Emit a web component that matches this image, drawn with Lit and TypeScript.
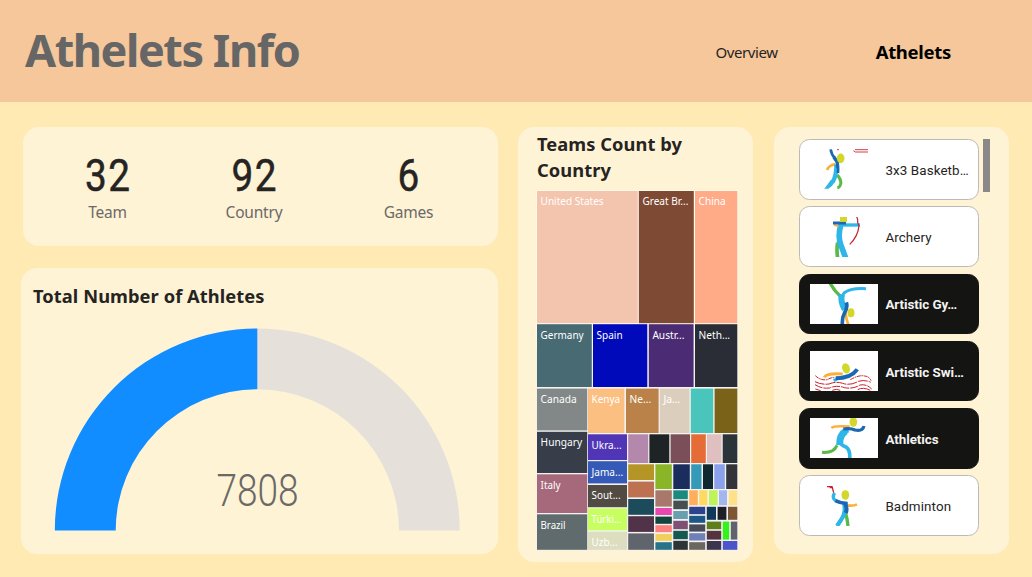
import { LitElement, html, svg, css } from "lit";
import { customElement } from "lit/decorators.js";

// x1, y1, x2, y2, fill, label, label width
type Cell = [number, number, number, number, string, string?, number?];

const CELLS: Cell[] = [
  [537, 191, 637.8, 323.2, "#f4c5ae", "United States", 63],
  [638.8, 191, 693.8, 323.2, "#7e4a34", "Great Br...", 46],
  [695, 191, 737.3, 323.2, "#ffab88", "China", 27],
  [537, 324.2, 591.8, 387, "#486b73", "Germany", 43],
  [593, 324.2, 647.3, 387, "#000abb", "Spain", 26],
  [648.8, 324.2, 693.6, 387, "#4b2c74", "Austr...", 32],
  [695, 324.2, 737.3, 387, "#2a2d36", "Neth...", 31.5],
  [537, 388.6, 587.2, 430.4, "#818887", "Canada", 36],
  [588, 388.6, 624.4, 433, "#fcbf82", "Kenya", 28.5],
  [626, 388.6, 658.6, 433, "#ba8248", "Ne...", 21.5],
  [659.8, 388.6, 689.5, 433, "#dccebd", "Ja...", 17],
  [690.8, 388.6, 713.2, 433, "#49c5bb"],
  [714.6, 388.6, 737.3, 433, "#7a6219"],
  [537, 431.8, 587.2, 473, "#373d49", "Hungary", 41.5],
  [537, 474.3, 587.2, 513, "#a6687b", "Italy", 20],
  [537, 514.3, 587.2, 549.8, "#5f6b6c", "Brazil", 25],
  [588, 434.3, 627, 460, "#5135b7", "Ukra...", 30],
  [588, 461.2, 627, 483.4, "#3559b6", "Jama...", 31.5],
  [588, 485, 627, 507.2, "#514b44", "Sout...", 29],
  [588, 508.4, 627, 530.3, "#c8ff60", "Türki...", 30],
  [588, 531.7, 627, 549.8, "#ddddc0", "Uzb...", 26],
  [628.2, 434.3, 648.2, 463, "#b487ad"],
  [649.4, 434.3, 669.3, 463, "#1e2426"],
  [670.6, 434.3, 690, 463, "#7b4f59"],
  [691.2, 434.3, 705.8, 463, "#e66c37"],
  [707, 434.3, 721.5, 463, "#dfbfbf"],
  [722.7, 434.3, 737.3, 463, "#2b3438"],
  [628.2, 464.3, 654, 480, "#b59525"],
  [628.2, 481.6, 654, 497.4, "#bd7150"],
  [628.2, 499, 654, 514.8, "#1c4c5b"],
  [628.2, 516.2, 654, 531.9, "#513349"],
  [628.2, 533.4, 654, 549.8, "#60656d"],
  [655.4, 464.3, 671.8, 489, "#8ab526"],
  [673.3, 464.3, 689.8, 489, "#1b2d5c"],
  [691.2, 464.3, 701.5, 489, "#3599b8"],
  [703, 464.3, 713, 489, "#10282f"],
  [714.3, 464.3, 724.8, 489, "#8ba1ec"],
  [726.2, 464.3, 737.3, 489, "#33343a"],
  [655.4, 490.3, 671.8, 506.6, "#a7786b"],
  [655.4, 508, 671.8, 515, "#e848ad"],
  [655.4, 516.6, 671.8, 523.8, "#13453f"],
  [655.4, 525.2, 671.8, 532.2, "#fc817e"],
  [655.4, 534, 671.8, 540.8, "#f2cf5b"],
  [655.4, 542.2, 671.8, 549.8, "#28738a"],
  [673.3, 490.3, 687.8, 499.2, "#1a8a80"],
  [673.3, 500.6, 687.8, 509.2, "#454f50"],
  [673.3, 511, 687.8, 519, "#68a0b0"],
  [673.3, 520.8, 687.8, 529.2, "#7e5074"],
  [673.3, 530.8, 687.8, 539.2, "#13594f"],
  [673.3, 540.8, 687.8, 549.8, "#2d3436"],
  [689.2, 490.3, 697.8, 505.2, "#ffae5c"],
  [699.2, 490.3, 707.3, 505.2, "#fedb60"],
  [709, 490.3, 717.6, 505.2, "#bef35a"],
  [719, 490.3, 727, 505.2, "#a3b6ed"],
  [728.8, 490.3, 737.3, 505.2, "#ffe18a"],
  [689.2, 506.8, 705.2, 514.2, "#2a438c"],
  [689.2, 515.8, 705.2, 522.8, "#1b5888"],
  [689.2, 524.4, 705.2, 531.6, "#484b57"],
  [689.2, 533.2, 705.2, 540.5, "#6f7fb8"],
  [689.2, 542.2, 705.2, 549.8, "#6b6660"],
  [706.8, 506.8, 716, 519.8, "#0f3a5b"],
  [717.6, 506.8, 726.4, 519.8, "#1e2027"],
  [728, 506.8, 737.3, 519.8, "#7d5734"],
  [706.8, 521.6, 721.2, 529.2, "#5e7d1b"],
  [706.8, 530.8, 721.2, 539.6, "#54343f"],
  [722.8, 521.6, 729.2, 539.6, "#33f31a"],
  [730.8, 521.6, 737.3, 539.6, "#60626e"],
  [706.8, 541, 721.2, 549.8, "#3b364e"],
  [722.8, 541, 737.3, 549.8, "#4b54c8"],
];

const basketball = svg`
  <path class="green" d="M217 182Q230 197 227 209Q225 219 217 221" stroke-width="9"/>
  <path class="orange" d="M211 149Q190 154 186 167" stroke-width="8"/>
  <path class="sky" d="M214 150Q215 183 203 203" stroke-width="13"/>
  <path class="skyfill" d="M198 196L178 223H190Q203 215 210 202Z"/>
  <path class="navy" d="M197 105Q199 121 211 133Q221 148 219 176" stroke-width="8"/>
  <path class="navy" d="M206 128L217 143L218 160" stroke-width="10"/>
  <ellipse class="head" cx="227" cy="132" rx="11.5" ry="14.5"/>
  <path class="red" d="M216 106H222M270 106H309M265 109L271 113H309" stroke-width="2.6"/>`;

const archery = svg`
  <path class="green" d="M218 382Q214 401 218 428" stroke-width="11"/>
  <path class="sky" d="M228 326Q217 366 228 390L242 428" stroke-width="17"/>
  <path class="sky" d="M218 329H285" stroke-width="10"/>
  <path class="orange" d="M207 328L221 334" stroke-width="6"/>
  <path class="navy" d="M204 323H243" stroke-width="9"/>
  <path class="headline" d="M225 312H246" stroke-width="15"/>
  <path class="red" d="M275 304L278 313V322L282 331Q279 364 254 387" stroke-width="3.6"/>`;

const gymnastics = svg`
  <path class="green" d="M120 54Q133 78 151 94" stroke-width="10"/>
  <path class="sky" d="M228 71Q182 68 162 84Q149 99 162 133" stroke-width="9"/>
  <path class="sky" d="M156 88Q150 108 164 134" stroke-width="18"/>
  <path class="orange" d="M166 138Q169 166 175 178" stroke-width="8"/>
  <path class="navy" d="M169 112Q174 128 163 145Q156 157 157 178" stroke-width="11"/>
  <ellipse class="head" cx="183" cy="143" rx="10.5" ry="13.5"/>`;

const swimming = svg`
  <path class="orange" d="M103 339Q109 326 158 329" stroke-width="9"/>
  <path class="sky" d="M131 349Q153 335 181 335" stroke-width="9"/>
  <path class="navy" d="M137 342Q182 342 202 315" stroke-width="12"/>
  <ellipse class="head" cx="168" cy="312" rx="11.5" ry="15.5" transform="rotate(-18 168 312)"/>
  <path class="red" d="M76 334Q91 349 112 346Q123 339 133 340M181 346Q207 331 224 335Q239 337 243 349" stroke-width="3" stroke-dasharray="12 2 5 2"/>
  <path class="red" d="M75 352Q94 362 117 359Q138 350 158 357Q181 365 205 351Q225 345 242 354" stroke-width="3" stroke-dasharray="30 3"/>
  <path class="red" d="M75 361Q95 374 119 371Q140 361 163 370Q190 375 210 362Q229 358 245 374" stroke-width="3" stroke-dasharray="24 3"/>
  <path class="red" d="M76 374L92 379M127 378Q139 372 151 378M203 376Q219 367 241 378" stroke-width="3"/>`;

const athletics = svg`
  <path class="green" d="M96 160Q131 163 141 139" stroke-width="9"/>
  <path class="sky" d="M176 95Q149 99 148 126Q150 137 168 144Q181 153 179 178" stroke-width="11"/>
  <path class="sky" d="M168 96Q148 107 149 138" stroke-width="21"/>
  <path class="orange" d="M124 87Q132 79 179 83" stroke-width="8"/>
  <path class="navy" d="M160 90Q183 87 195 93Q218 98 222 81" stroke-width="9.5"/>
  <ellipse class="head" cx="190" cy="69" rx="11.5" ry="14.5"/>`;

const badminton = svg`
  <path class="green" d="M166 338Q172 357 174 379" stroke-width="10"/>
  <path class="sky" d="M134 280Q124 294 137 303" stroke-width="10"/>
  <path class="sky" d="M162 310Q169 340 153 361L141 379" stroke-width="12.5"/>
  <path class="orange" d="M174 317Q189 320 201 314" stroke-width="8"/>
  <path class="navy" d="M136 303Q151 311 173 312" stroke-width="11"/>
  <path class="navy" d="M166 312Q173 330 167 340" stroke-width="12"/>
  <ellipse class="head" cx="166" cy="286" rx="11.5" ry="14.5"/>
  <path class="red" d="M111 261H128M119 264L127 264L131 279" stroke-width="4"/>`;

const SPORTS = [
  { name: "3x3 Basketb…", on: false, box: "135 104 204 120", art: basketball },
  { name: "Archery", on: false, box: "135 305 204 120", art: archery },
  { name: "Artistic Gy…", on: true, box: "60 57 204 120", art: gymnastics },
  { name: "Artistic Swi…", on: true, box: "60 260 204 120", art: swimming },
  { name: "Athletics", on: true, box: "60 57 204 120", art: athletics },
  { name: "Badminton", on: false, box: "60 259 204 120", art: badminton },
];

@customElement("app-root")
export class AppRoot extends LitElement {
  static styles = css`
    :host {
      display: block;
      width: 1032px;
      height: 577px;
      overflow: hidden;
      background: #ffeab4;
      font-family: "Noto Sans", "Open Sans", sans-serif;
      color: #252423;
    }
    * { box-sizing: border-box; }
    header {
      height: 102px;
      background: #f5c79b;
      display: flex;
      align-items: center;
      padding: 0 81px 0 25px;
    }
    h1 {
      margin: 0 auto 0 0;
      font-size: 45px;
      font-weight: 700;
      line-height: 60px;
      letter-spacing: -1.45px;
      color: #666;
      padding-bottom: 3px;
    }
    nav { display: flex; align-items: center; gap: 98px; color: #252423; }
    .tab { font-size: 15px; letter-spacing: -0.4px; padding-top: 2px; }
    .tab.current { font-size: 18.5px; font-weight: 700; letter-spacing: -0.3px; color: #000; padding-top: 1px; }
    main {
      display: grid;
      grid-template-columns: 477px 236px 235px;
      column-gap: 20px;
      align-items: start;
      padding: 24.6px 0 0 21px;
    }
    .card { background: #fff3d6; border-radius: 16px; }
    .left { display: flex; flex-direction: column; gap: 22px; }
    .kpis {
      margin-left: 2px;
      height: 119.4px;
      display: grid;
      grid-template-columns: 163px 130px 179px;
      padding: 25px 0 0 3px;
      text-align: center;
    }
    .num {
      font: 400 45px/48px Roboto, sans-serif;
      -webkit-text-stroke: 0.5px #252423;
      letter-spacing: 2px;
      text-indent: 2px;
      transform: scaleX(0.86);
    }
    .cap { font-size: 15.5px; line-height: 22px; margin-top: 1px; color: #6b6967; letter-spacing: -0.2px; }
    h2 { margin: 0; font-size: 18.3px; line-height: 26px; font-weight: 700; letter-spacing: 0.07px; }
    .gauge { height: 286px; padding: 15px 12px 0; }
    .dial { display: block; margin: 19.4px 0 0 21px; }
    .total { font: 300 44px Roboto, sans-serif; fill: #6b6967; }
    .teams { width: 235px; height: 435px; padding: 4px 15px 0 19px; }
    .tree { display: block; margin-top: 7.4px; margin-left: -1px; }
    .lbl { font-size: 11.3px; fill: #fff; }
    .picker { height: 427px; display: flex; gap: 4px; padding: 12.4px 0 0 25px; }
    .list { width: 180px; display: flex; flex-direction: column; gap: 6.7px; }
    .item {
      height: 60.6px;
      border: 1px solid #bcbab8;
      border-radius: 10.5px;
      background: #fff;
      display: flex;
      align-items: center;
      gap: 7.4px;
      padding-left: 10px;
      font: 400 13.4px Roboto, sans-serif;
      letter-spacing: 0.1px;
      white-space: nowrap;
    }
    .item span { padding-top: 2px; }
    .item.on { background: #141412; border-color: #141412; color: #f3f2f1; font-weight: 700; letter-spacing: -0.05px; }
    .thumb { width: 68px; height: 40px; flex: none; background: #fff; fill: none; }
    .bar { width: 7px; height: 53px; background: #8b8987; }
    .green { stroke: #5bb947; }
    .orange { stroke: #fcb03c; }
    .sky { stroke: #2eb6e8; }
    .skyfill { fill: #2eb6e8; }
    .navy { stroke: #1b67b2; }
    .red { stroke: #c9202c; }
    .head { fill: #d2d729; }
    .headline { stroke: #d2d729; }
  `;

  render() {
    return html`
      <header>
        <h1>Athelets Info</h1>
        <nav>
          <span class="tab">Overview</span>
          <span class="tab current">Athelets</span>
        </nav>
      </header>
      <main>
        <div class="left">
          <section class="card kpis">
            ${[["32", "Team"], ["92", "Country"], ["6", "Games"]].map(
              ([n, c]) => html`<div><div class="num">${n}</div><div class="cap">${c}</div></div>`
            )}
          </section>
          <section class="card gauge">
            <h2>Total Number of Athletes</h2>
            <svg class="dial" width="406" height="204" viewBox="54 328.5 406 204">
              <path fill="#e6e0da" d="M257 329A202.5 202 0 0 1 459.7 531H399A142 141.5 0 0 0 257 389.7Z" />
              <path fill="#118dff" d="M257.3 329A202.5 202 0 0 0 54.8 531H115.7A142 141.5 0 0 1 257.3 389.7Z" />
              <text class="total" x="216.6" y="506" textLength="82" lengthAdjust="spacingAndGlyphs">7808</text>
            </svg>
          </section>
        </div>
        <section class="card teams">
          <h2>Teams Count by<br />Country</h2>
          <svg class="tree" width="202" height="361" viewBox="536 190 202 361">
            <rect x="536.4" y="190.4" width="201.5" height="160" fill="#fff" fill-opacity=".75" />
            <rect x="536.4" y="350" width="201.5" height="200.5" fill="#f4f2f0" />
            ${CELLS.map(
              ([a, b, c, d, fill, label, w]) => svg`
                <rect x=${a} y=${b} width=${c - a} height=${d - b} fill=${fill} />
                ${label
                  ? svg`<text class="lbl" x=${a + 3.6} y=${b + 14.3} textLength=${w} lengthAdjust="spacingAndGlyphs">${label}</text>`
                  : ""}`
            )}
          </svg>
        </section>
        <section class="card picker">
          <div class="list">
            ${SPORTS.map(
              (s) => html`
                <div class="item ${s.on ? "on" : ""}">
                  <svg class="thumb" viewBox=${s.box}>${s.art}</svg>
                  <span>${s.name}</span>
                </div>`
            )}
          </div>
          <div class="bar"></div>
        </section>
      </main>
    `;
  }
}
